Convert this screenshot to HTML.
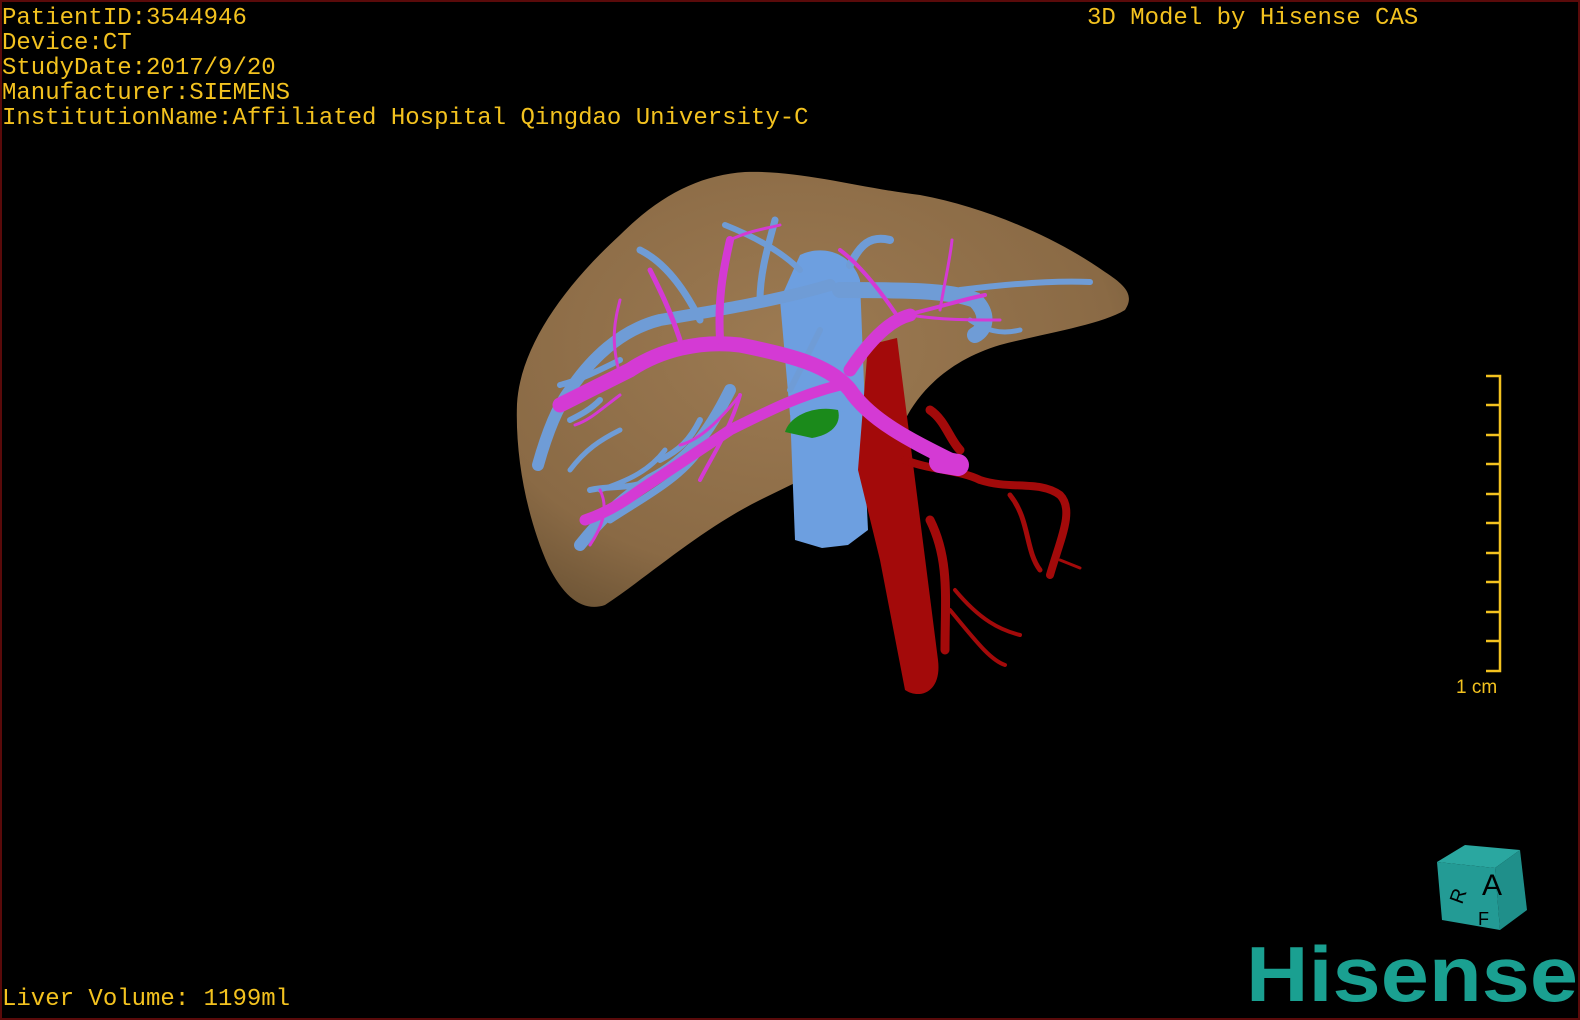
<!DOCTYPE html>
<html><head><meta charset="utf-8"><style>
html,body{margin:0;padding:0;background:#000;}
body{width:1580px;height:1020px;position:relative;overflow:hidden;}
.frame{position:absolute;left:0;top:0;width:1576px;height:1016px;border:2px solid #5a0a0a;}
.t{position:absolute;font-family:"Liberation Mono",monospace;font-size:24px;color:#f3c21f;line-height:25px;white-space:pre;}
svg{position:absolute;left:0;top:0;}
</style></head><body>
<svg width="1580" height="1020" viewBox="0 0 1580 1020">
<defs>
<radialGradient id="lv" cx="0.45" cy="0.4" r="0.7">
<stop offset="0" stop-color="#9c7a52"/><stop offset="0.75" stop-color="#8a6a45"/><stop offset="1" stop-color="#6e5536"/>
</radialGradient>
</defs>
<path d="M517,404 C520,350 560,290 620,235 C660,195 700,175 745,172 C800,170 860,188 920,195 C990,208 1060,240 1105,272 C1125,285 1135,295 1125,310 C1100,325 1050,332 1000,345 C950,360 920,390 905,420 C880,445 820,470 760,500 C700,530 650,575 605,605 C585,612 565,600 548,565 C528,520 515,460 517,404 Z" fill="url(#lv)"/>
<path d="M790,410 L862,405 L868,530 L848,545 L822,548 L795,540 Z" fill="#6d9fe0"/>
<path d="M800,255 C820,245 850,250 860,280 L865,410 L790,415 L780,300 Z" fill="#6d9fe0"/>
<path d="M868,345 L897,338 L938,660 C942,692 920,700 905,690 L880,560 L858,470 Z" fill="#a30a0a"/>
<g fill="none" stroke="#a30a0a" stroke-linecap="round">
<path d="M905,460 C930,470 960,470 980,480 C1010,490 1040,480 1060,495 C1075,510 1060,540 1050,575" stroke-width="8"/>
<path d="M1010,495 C1030,520 1025,550 1040,570" stroke-width="5"/>
<path d="M930,410 C945,420 950,440 960,450" stroke-width="9"/>
<path d="M930,520 C950,560 945,600 945,650" stroke-width="9"/>
<path d="M955,590 C980,620 1000,630 1020,635" stroke-width="4"/>
<path d="M950,610 C975,640 990,660 1005,665" stroke-width="4"/>
<path d="M1060,560 L1080,568" stroke-width="3"/>
</g>
<g fill="none" stroke="#6f9cd6" stroke-linecap="round">
<path d="M840,290 C900,290 950,290 975,300 C990,315 985,330 975,335" stroke-width="16"/>
<path d="M960,290 C1000,285 1050,280 1090,282" stroke-width="6"/>
<path d="M830,285 C780,300 720,310 660,320 C620,330 590,360 570,390 C555,410 545,440 538,465" stroke-width="12"/>
<path d="M700,320 C680,280 660,260 640,250" stroke-width="7"/>
<path d="M760,300 C760,270 770,240 775,220" stroke-width="7"/>
<path d="M800,270 C780,250 750,235 725,225" stroke-width="6"/>
<path d="M850,265 C860,245 870,235 890,240" stroke-width="8"/>
<path d="M730,390 C710,430 690,460 650,480 C620,500 600,520 580,545" stroke-width="12"/>
<path d="M700,450 C680,480 640,500 610,520" stroke-width="7"/>
<path d="M650,480 C630,490 610,485 590,490" stroke-width="6"/>
<path d="M620,360 C600,370 580,380 560,385" stroke-width="6"/>
<path d="M600,400 C590,410 580,415 570,420" stroke-width="6"/>
<path d="M700,420 C690,440 680,450 660,460" stroke-width="6"/>
<path d="M665,450 C650,470 630,480 600,490" stroke-width="5"/>
<path d="M620,430 C600,440 585,450 570,470" stroke-width="5"/>
<path d="M820,330 C810,350 800,370 790,390" stroke-width="6"/>
<path d="M970,320 C985,330 1000,335 1020,330" stroke-width="5"/>
</g>
<path d="M785,432 C790,415 815,405 838,410 C842,425 830,435 812,438 Z" fill="#1b8a1b"/>
<g fill="none" stroke="#d43ad4" stroke-linecap="round">
<path d="M950,460 C910,440 870,420 850,390 C830,365 790,355 740,345 C700,340 660,350 630,370 C600,385 580,395 560,405" stroke-width="15"/>
<path d="M940,462 L958,465" stroke-width="22"/>
<path d="M840,385 C800,395 770,410 730,430 C700,450 670,470 640,490 C620,505 600,515 585,520" stroke-width="11"/>
<path d="M850,370 C870,340 890,320 910,315" stroke-width="13"/>
<path d="M905,315 C930,310 960,300 985,295" stroke-width="4"/>
<path d="M910,315 C940,320 970,320 1000,320" stroke-width="3"/>
<path d="M900,320 C880,290 860,265 840,250" stroke-width="4"/>
<path d="M940,310 C945,280 950,260 952,240" stroke-width="3"/>
<path d="M720,340 C718,300 722,275 730,240" stroke-width="8"/>
<path d="M680,340 C670,310 660,290 650,270" stroke-width="5"/>
<path d="M620,375 C610,340 615,320 620,300" stroke-width="3"/>
<path d="M740,395 C720,420 700,440 680,445" stroke-width="3"/>
<path d="M740,395 C730,430 710,460 700,480" stroke-width="4"/>
<path d="M600,490 C610,510 600,530 590,545" stroke-width="3"/>
<path d="M620,395 C600,410 590,420 575,425" stroke-width="3"/>
<path d="M730,240 C750,230 770,228 780,225" stroke-width="3"/>
</g>
<g stroke="#f3c21f" stroke-width="2.5" fill="none">
<path d="M1486,376 H1500 V671 H1486"/>
<path d="M1486,405 H1500 M1486,435 H1500 M1486,464 H1500 M1486,494 H1500 M1486,523 H1500 M1486,553 H1500 M1486,582 H1500 M1486,612 H1500 M1486,641 H1500"/>
</g>
<text x="1456" y="693" font-family="Liberation Sans,sans-serif" font-size="19" fill="#f3c21f">1 cm</text>
<polygon points="1437,862 1465,845 1520,850 1495,868" fill="#2aa7a0"/>
<polygon points="1495,868 1520,850 1527,910 1500,930" fill="#1f8f8a"/>
<polygon points="1437,862 1495,868 1500,930 1442,920" fill="#239b95"/>
<text x="1482" y="895" font-family="Liberation Sans,sans-serif" font-size="30" fill="#000">A</text>
<text x="1448" y="905" font-family="Liberation Sans,sans-serif" font-size="20" fill="#000" transform="rotate(-70 1455 895)">R</text>
<text x="1478" y="925" font-family="Liberation Sans,sans-serif" font-size="18" fill="#000">F</text>
<text x="1246" y="1001" font-family="Liberation Sans,sans-serif" font-weight="bold" font-size="78" fill="#1aa091" textLength="332" lengthAdjust="spacingAndGlyphs">Hisense</text>
</svg>
<div class="frame"></div>
<div class="t" style="left:2px;top:6px;">PatientID:3544946
Device:CT
StudyDate:2017/9/20
Manufacturer:SIEMENS
InstitutionName:Affiliated Hospital Qingdao University-C</div>
<div class="t" style="left:1087px;top:6px;">3D Model by Hisense CAS</div>
<div class="t" style="left:2px;top:987px;">Liver Volume: 1199ml</div>
</body></html>
